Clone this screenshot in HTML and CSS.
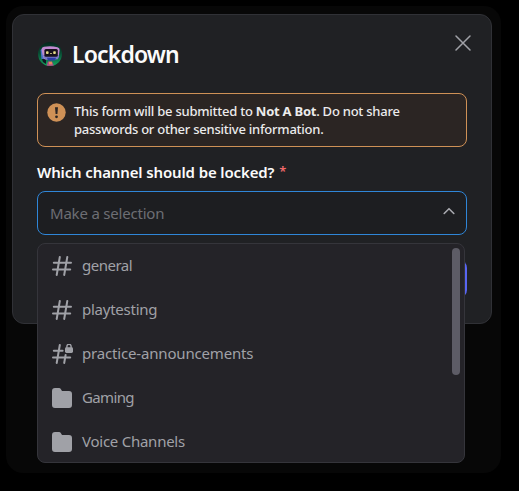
FILE: index.html
```html
<!DOCTYPE html>
<html lang="en">
<head>
<meta charset="utf-8">
<title>Lockdown</title>
<link rel="stylesheet" href="styles.css">
</head>
<body>
<div class="backdrop">
  <section class="modal">
    <header class="header">
      <svg class="avatar" width="24" height="24" viewBox="0 0 24 24">
        <defs>
          <linearGradient id="bg" x1="0" y1="0" x2="0" y2="1"><stop offset="0" stop-color="#05261c"/><stop offset=".45" stop-color="#084a32"/><stop offset="1" stop-color="#12a560"/></linearGradient>
          <clipPath id="round"><circle cx="12" cy="12" r="12"/></clipPath>
        </defs>
        <g clip-path="url(#round)">
          <rect width="24" height="24" fill="url(#bg)"/>
          <path d="M2.5 8 3.5 17 8 17 5 6Z" fill="#4c72c8"/>
          <path d="M4 17 8 17 8 22 5 20Z" fill="#101522"/>
          <path d="M6 4.8Q13 3.6 19.5 5.2 21.8 5.8 21.6 8L20.8 14.5Q20.4 17 18 17.2L8 17.4Q5.4 17.2 5 14.5L3.6 8Q3.4 5.4 6 4.8Z" fill="#c08ad0"/>
          <path d="M5 13 21 13 20 17.2 7 17.4Z" fill="#7a78c8"/>
          <rect x="6.4" y="7" width="13.4" height="7.8" rx="1.5" fill="#17111d"/>
          <path d="M9 15.8 18 15.8 17 18.6 10 18.6Z" fill="#2c3fa8"/>
          <rect x="8" y="9.2" width="2.6" height="2.8" rx=".8" fill="#e4da84"/>
          <rect x="15.2" y="9.2" width="2.6" height="2.8" rx=".8" fill="#e4da84"/>
          <rect x="12" y="11" width="2" height="1" fill="#b3a872"/>
          <path d="M8.5 24 10 19.4 14 19.4 16 24Z" fill="#b04a86"/>
          <rect x="11" y="19.8" width="3" height="2.6" fill="#e08a58"/>
        </g>
      </svg>
      <h1 class="title">Lockdown</h1>
      <svg class="close" width="16" height="16" viewBox="0 0 16 16"><path d="M1 1 15 15M15 1 1 15"/></svg>
    </header>
    <div class="notice">
      <svg class="warn" width="19" height="19" viewBox="0 0 19 19"><circle cx="9.5" cy="9.5" r="9.2" fill="#cf9156"/><path d="M8 4.2h3L10.4 11H8.6Z" fill="#2b2523"/><circle cx="9.5" cy="13.8" r="1.4" fill="#2b2523"/></svg>
      <p class="notice-text"><span class="line">This form will be submitted to <b>Not A Bot</b>. Do not share</span> <span class="line">passwords or other sensitive information.</span></p>
    </div>
    <div class="label"><span class="label-text">Which channel should be locked?</span><span class="star">*</span></div>
    <div class="select">
      <span class="placeholder">Make a selection</span>
      <svg class="chevron" width="12" height="8" viewBox="0 0 12 8"><path d="M1.2 6.5 6 1.7 10.8 6.5"/></svg>
      <ul class="menu">
        <li class="item"><svg class="icon" width="20" height="20" viewBox="0 0 20 20"><path class="hash" d="M7.8 1 4.7 19M15.3 1 12.2 19M1.8 6.7H19M1 13.5H18.2"/></svg><span class="name tight">general</span></li>
        <li class="item"><svg class="icon" width="20" height="20" viewBox="0 0 20 20"><path class="hash" d="M7.8 1 4.7 19M15.3 1 12.2 19M1.8 6.7H19M1 13.5H18.2"/></svg><span class="name">playtesting</span></li>
        <li class="item"><svg class="icon wide" width="22" height="20" viewBox="0 0 22 20"><path class="hash" d="M7.8 1 4.7 19M13.6 11 12.2 19M1.8 6.7H10.6M1 13.5H18.2"/><rect class="solid" x="13" y="3.2" width="8" height="5.8" rx="1.4"/><path class="shackle" d="M14.9 4V2.4a2.1 2.1 0 0 1 4.2 0V4"/></svg><span class="name loose">practice-announcements</span></li>
        <li class="item"><svg class="icon" width="20" height="20" viewBox="0 0 20 20"><path class="solid" d="M0 3a3 3 0 0 1 3-3h4q1.2 0 1.8 1L10 3h7a3 3 0 0 1 3 3v11a3 3 0 0 1-3 3H3a3 3 0 0 1-3-3Z"/></svg><span class="name tighter">Gaming</span></li>
        <li class="item"><svg class="icon" width="20" height="20" viewBox="0 0 20 20"><path class="solid" d="M0 3a3 3 0 0 1 3-3h4q1.2 0 1.8 1L10 3h7a3 3 0 0 1 3 3v11a3 3 0 0 1-3 3H3a3 3 0 0 1-3-3Z"/></svg><span class="name">Voice Channels</span></li>
        <li class="thumb"></li>
      </ul>
    </div>
    <footer class="footer"><button class="submit"></button></footer>
  </section>
</div>
</body>
</html>
```
FILE: styles.css
```css
* { box-sizing: border-box; margin: 0; padding: 0; }
body { width: 519px; height: 491px; overflow: hidden; background: #000; padding: 6px 18px 18px 6px; font-family: "Noto Sans", sans-serif; }
.backdrop { width: 495px; height: 467px; border-radius: 17px; background: #070707; padding: 8px 9px 0 6px; }
.modal { width: 480px; height: 310px; border: 1px solid #303136; border-radius: 12px; background: #202124; padding: 0 24px; }
.header { height: 78px; display: flex; align-items: center; }
.avatar { margin-left: .5px; }
.title { margin-left: 10.5px; font-size: 23px; line-height: 30px; font-weight: 600; color: #fbfbfb; letter-spacing: -.85px; }
.close { margin: -22px -4px 0 auto; stroke: #a0a1a7; stroke-width: 1.5; fill: none; stroke-linecap: round; }
.notice { height: 54px; border: 1px solid #cf9156; border-radius: 8px; background: #2b2523; display: flex; padding: 8px; }
.warn { flex: none; margin: 1px 0 0 .5px; }
.notice-text { margin-left: 8.5px; font-size: 13px; line-height: 18px; font-weight: 500; color: #ebebec; }
.line { display: block; white-space: nowrap; letter-spacing: -.24px; }
.notice-text b { font-weight: 700; }
.label { height: 44px; padding-top: 15px; line-height: 20px; font-size: 15px; font-weight: 600; color: #fbfbfb; display: flex; }
.label-text { letter-spacing: -.13px; }
.star { margin: -1px 0 0 5px; font-size: 13px; color: #f0696b; }
.select { position: relative; height: 44px; border: 1px solid #2f86d8; border-radius: 8px; background: #1d1e21; display: flex; align-items: center; justify-content: space-between; padding: 0 11px 0 12px; }
.placeholder { font-size: 15px; color: #6d6e74; letter-spacing: -.2px; }
.chevron { fill: none; stroke: #a9aab0; stroke-width: 1.6; stroke-linecap: round; stroke-linejoin: round; margin-top: -5px; }
.menu { position: absolute; left: -1px; top: 51px; width: 428px; height: 220px; border: 1px solid #35353b; border-radius: 8px; background: #242328; list-style: none; }
.item { height: 44px; display: flex; align-items: center; padding-left: 14px; font-size: 15px; color: #a0a1a7; white-space: nowrap; }
.icon { flex: none; }
.wide { margin-right: -2px; }
.name { margin: -2px 0 0 10px; letter-spacing: -.25px; }
.tight { letter-spacing: -.5px; }
.tighter { letter-spacing: -.65px; }
.loose { letter-spacing: -.17px; }
.hash { stroke: #a0a1a7; stroke-width: 2; stroke-linecap: round; fill: none; }
.solid { fill: #a0a1a7; }
.shackle { fill: none; stroke: #a0a1a7; stroke-width: 1.4; }
.thumb { position: absolute; right: 4px; top: 4px; width: 8px; height: 127px; border-radius: 4px; background: #5d5c66; }
.footer { padding-top: 25px; display: flex; justify-content: flex-end; }
.submit { width: 84px; height: 38px; border: 0; border-radius: 8px; background: #5865f2; }
```
